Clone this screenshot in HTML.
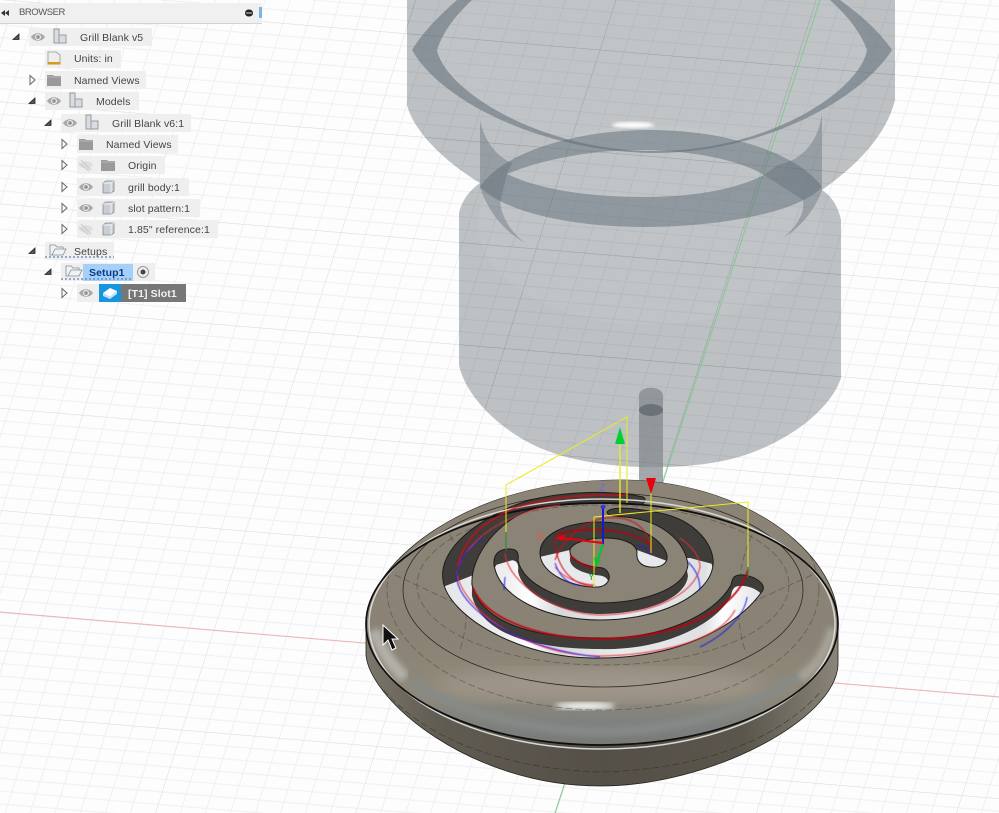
<!DOCTYPE html>
<html><head><meta charset="utf-8"><style>
html,body{margin:0;padding:0;background:#fdfdfd}
#p{position:relative;width:999px;height:813px;overflow:hidden;font-family:"Liberation Sans",sans-serif}
svg.s{position:absolute;left:0;top:0}
.r{position:absolute;height:18px;background:rgba(238,238,238,.94)}
.t{position:absolute;font-size:10.5px;line-height:14px;color:#444;white-space:nowrap;filter:blur(.25px);letter-spacing:.1px}
</style></head><body><div id="p">
<svg class="s" width="999" height="813" viewBox="0 0 999 813">
<defs>
<pattern id="g" width="195" height="99.5" patternUnits="userSpaceOnUse" patternTransform="matrix(1 .084 -.32 1 603.7 663)">
<path d="M24.4 0V99.500M48.8 0V99.500M73.100 0V99.500M97.500 0V99.500M121.900 0V99.500M146.300 0V99.500M170.600 0V99.500M0 12.440H195M0 24.880H195M0 37.310H195M0 49.750H195M0 62.190H195M0 74.630H195M0 87.060H195" stroke="#f0f0f2" stroke-width="1" fill="none"/>
<path d="M0 0V99.500M0 0H195" stroke="#dcdcdd" stroke-width="1.100" fill="none"/>
</pattern>
<pattern id="g2" width="195" height="99.5" patternUnits="userSpaceOnUse" patternTransform="matrix(1 .084 -.32 1 603.7 663)">
<path d="M24.4 0V99.500M48.8 0V99.500M73.100 0V99.500M97.500 0V99.500M121.900 0V99.500M146.300 0V99.500M170.600 0V99.500M0 12.440H195M0 24.880H195M0 37.310H195M0 49.750H195M0 62.190H195M0 74.630H195M0 87.060H195" stroke="#a3a9ad" stroke-width="1" fill="none" stroke-opacity=".35"/>
<path d="M0 0V99.500M0 0H195" stroke="#858b90" stroke-width="1.100" fill="none" stroke-opacity=".6"/>
</pattern>
<path id="hold" d="M407 0V105C415 135 450 165 480 183C470 190 462 200 459 213V365C465 395 500 432 545 450C600 472 695 472 745 455C790 440 830 410 841 378V220C838 205 830 195 822 190C850 170 885 140 895 100V0Z"/>
<clipPath id="ch"><use href="#hold"/></clipPath>
<linearGradient id="dome" x1="0" y1="480" x2="0" y2="745" gradientUnits="userSpaceOnUse">
<stop offset="0" stop-color="#8b8477"/><stop offset=".6" stop-color="#8a8375"/><stop offset=".8" stop-color="#8f897a"/><stop offset=".93" stop-color="#7d807e"/><stop offset="1" stop-color="#787a77"/>
</linearGradient>
<linearGradient id="wall" x1="366" y1="0" x2="838" y2="0" gradientUnits="userSpaceOnUse">
<stop offset="0" stop-color="#7b766a"/><stop offset=".15" stop-color="#615c52"/><stop offset=".5" stop-color="#544f47"/><stop offset=".8" stop-color="#5b564c"/><stop offset="1" stop-color="#8a8578"/>
</linearGradient>
<filter id="b3"><feGaussianBlur stdDeviation="3"/></filter>
<filter id="b1"><feGaussianBlur stdDeviation="1.500"/></filter>
<filter id="b8"><feGaussianBlur stdDeviation="9"/></filter>
<filter id="soft"><feGaussianBlur stdDeviation=".4"/></filter>
<path id="sa" d="M643 497C610 489 540 490 500 512C455 535 440 560 443 580C447 615 520 660 600 658C680 658 740 625 763 590C766 582 750 574 740 575C733 575 732 580 731 585C715 615 660 640 600 638C530 638 482 622 472 585C470 555 500 520 530 510C560 500 610 503 640 505C646 503 646 498 643 497Z"/>
<path id="sb" d="M607 512C612 505 640 509 660 513C695 520 715 545 713 565C710 595 660 620 600 620C550 620 500 600 494 565C493 553 500 549 510 549C517 549 519 553 518 560C522 585 565 603 600 603C640 603 685 590 688 565C685 540 660 520 625 517C615 516 607 516 607 512Z"/>
<path id="sc" d="M667 556C665 540 635 522 600 522C565 522 540 535 540 553C540 575 575 588 598 587C608 586 612 578 607 571C603 566 595 568 590 566C578 563 569 558 570 550C572 542 590 538 605 538C622 538 636 543 637 552C636 560 640 566 650 567C660 568 668 564 667 556Z"/>
<clipPath id="ca"><use href="#sa"/></clipPath>
<clipPath id="cb"><use href="#sb"/></clipPath>
<clipPath id="cc"><use href="#sc"/></clipPath>
<clipPath id="cd"><path d="M366 622C370 560 470 480 620 480C740 480 838 550 838 622V665C835 720 710 786 600 786C470 786 370 700 366 655Z"/></clipPath>
<linearGradient id="fl" x1="440" y1="0" x2="770" y2="0" gradientUnits="userSpaceOnUse">
<stop offset="0" stop-color="#e5e6ea"/><stop offset=".2" stop-color="#eeeef0"/><stop offset=".27" stop-color="#fff"/><stop offset=".36" stop-color="#d8d9dc"/><stop offset=".55" stop-color="#e9eaec"/><stop offset=".8" stop-color="#dfe0e3"/><stop offset=".86" stop-color="#fff"/><stop offset="1" stop-color="#dcdde2"/>
</linearGradient>
</defs>
<rect width="999" height="813" fill="#fdfdfd"/>
<rect width="999" height="813" fill="url(#g)"/>
<path d="M0 612L999 697" stroke="#eeb4b4" stroke-width="1"/>

<!-- translucent tool holder -->
<use href="#hold" fill="#b0b5b8" fill-opacity=".84"/>
<rect width="999" height="480" fill="url(#g2)" clip-path="url(#ch)"/>
<ellipse cx="652" cy="45" rx="215" ry="105" fill="#fff" fill-opacity=".06"/>
<ellipse cx="650" cy="225" rx="172" ry="100" fill="#fff" fill-opacity=".05"/>
<path d="M820 0L555 813" stroke="#7fcb8c" stroke-width="1"/>
<!-- top ring -->
<path fill="#5e6c77" fill-opacity=".55" d="M457 0Q425 28 412 50C440 100 540 152 655 153C765 152 860 100 892 50Q875 25 840 0H830Q858 25 867 50C860 90 770 151 655 151C540 151 445 90 437 50Q445 25 472 0Z"/>
<!-- neck walls -->
<path fill="#5e6c77" fill-opacity=".4" d="M480 120C485 145 500 158 512 163L507 174L500 203C503 220 512 233 525 243C505 232 488 212 480 187Z"/>
<path fill="#5e6c77" fill-opacity=".4" d="M822 113C818 145 800 160 778 165L764 175L803 200C805 215 795 228 783 238C800 228 815 210 822 190Z"/>
<!-- second ring -->
<path fill="#5e6c77" fill-opacity=".5" fill-rule="evenodd" d="M480 187C500 155 570 130 650 130C730 130 800 155 822 187C800 212 720 227 645 227C570 227 505 212 480 187ZM507 174C540 160 590 150 640 150C690 150 740 160 764 175C735 190 690 197 645 197C590 197 540 190 507 174Z"/>
<ellipse cx="633" cy="125" rx="21" ry="3" fill="#fff" filter="url(#b1)"/>
<!-- stem -->
<path d="M639 396C639 385 663 385 663 396V490H639Z" fill="#80868a" fill-opacity=".72"/>
<ellipse cx="651" cy="410" rx="12" ry="6" fill="#60676c" fill-opacity=".75"/>

<!-- disc -->
<path d="M366 622C370 560 470 480 620 480C740 480 838 550 838 622V665C835 720 710 786 600 786C470 786 370 700 366 655Z" fill="url(#wall)" stroke="#23221f" stroke-width=".8"/>
<path d="M366 624C370 560 470 480 620 480C740 480 838 550 838 624A236 121 0 0 1 366 624Z" fill="url(#dome)"/>
<g clip-path="url(#cd)">
<ellipse cx="600" cy="685" rx="165" ry="16" fill="#a0978a" filter="url(#b8)"/>
<ellipse cx="585" cy="706" rx="30" ry="3.500" fill="#fff" filter="url(#b3)"/>
<path d="M410 680C460 715 530 730 600 732C680 730 745 712 800 675" stroke="#868a88" stroke-width="8" fill="none" filter="url(#b3)"/>
<path d="M374 630C380 650 392 665 405 678" stroke="#b2b0a9" stroke-width="12" fill="none" filter="url(#b3)"/>
<path d="M833 628C825 655 815 668 800 678" stroke="#a7a398" stroke-width="10" fill="none" filter="url(#b3)"/>
<!-- lines on dome -->
<g fill="none" stroke="#2b2925" stroke-width=".8">
<ellipse cx="603" cy="590" rx="200" ry="97"/>
<g stroke-dasharray="7 3" stroke="#3c3a35" stroke-opacity=".5">
<ellipse cx="603" cy="590" rx="216" ry="120"/>
<ellipse cx="603" cy="585" rx="186" ry="80"/>
<path d="M395 575L470 610M812 575L735 610M450 535C470 570 470 620 460 650M752 535C735 570 735 620 745 650"/>
</g>
</g>
</g>
<!-- slots -->
<use href="#sa" fill="#3f3d39"/>
<g clip-path="url(#ca)"><use href="#sa" fill="url(#fl)" transform="translate(0 11)"/><path d="M430 592L476 574L745 574L770 592V480H430Z" fill="#3f3d39"/></g>
<use href="#sb" fill="#3f3d39"/>
<g clip-path="url(#cb)"><use href="#sb" fill="url(#fl)" transform="translate(0 11)"/><path d="M485 568L520 558L690 558L720 566V500H485Z" fill="#3f3d39"/></g>
<use href="#sc" fill="#3f3d39"/>
<g clip-path="url(#cc)"><use href="#sc" fill="#e8e9ec" transform="translate(0 8)"/><path d="M535 558L570 550L637 550L670 562V515H535Z" fill="#3f3d39"/></g>
<g fill="none" stroke="#1d1c1a" stroke-width="1"><use href="#sa"/><use href="#sb"/><use href="#sc"/></g>
<!-- rim lines -->
<ellipse cx="602" cy="624" rx="233" ry="125" fill="none" stroke="#d8d8d4" stroke-width="1.500"/>
<ellipse cx="602" cy="624" rx="236" ry="121" fill="none" stroke="#0f0f0f" stroke-width="1.700"/>
<path d="M384 690C430 745 520 770 600 772C690 770 775 745 822 690" fill="none" stroke="#2f2e2a" stroke-opacity=".7" stroke-width=".7" stroke-dasharray="7 3"/>

<!-- toolpaths -->
<g fill="none" filter="url(#soft)">
<path d="M457 566C468 530 490 520 517 507C560 495 590 495 627 495" stroke="#c5101a" stroke-width="1.500"/>
<path d="M473 588C485 618 535 638 600 639C670 638 735 615 748 570" stroke="#c00010" stroke-width="1.700"/>
<path d="M457 572C460 605 520 655 600 656C660 655 720 640 735 610" stroke="#e4303c" stroke-width="1"/>
<path d="M457 572C470 530 520 510 560 505" stroke="#e4303c" stroke-width=".9"/>
<path d="M505 553C508 585 560 615 600 615C650 615 695 595 700 567C700 555 690 545 680 538" stroke="#e4303c" stroke-width="1"/>
<path d="M555 560C560 545 580 522 605 518C635 515 650 530 651 552" stroke="#c5101a" stroke-width="1"/>
<path d="M555 567C565 580 585 585 595 585" stroke="#e4303c" stroke-width="1"/>
<path d="M555 538C555 565 570 585 593 586" stroke="#d00010" stroke-width="1"/>
<path d="M570 555C580 565 590 568 597 568" stroke="#b80010" stroke-width="1.500"/>
<path d="M555 535C575 528 625 525 651 545" stroke="#b80010" stroke-width="1.500"/>
<path d="M484 538C465 550 456 565 457 580C462 610 520 650 600 657" stroke="#2222dd" stroke-width="1"/>
<path d="M700 647C725 635 745 615 747 597" stroke="#2222dd" stroke-width="1"/>
<path d="M505 577L504 590M637 545C645 547 650 550 651 554M688 562C696 570 700 578 700 590" stroke="#2222dd" stroke-width="1"/>
<path d="M555 563C560 578 570 585 580 585" stroke="#2222dd" stroke-width="1"/>
</g>
<!-- yellow box -->
<g fill="none" stroke="#ecec20" stroke-width="1">
<path d="M506 532V485L627 417V503"/>
<path d="M594 587V517L687 508L748 502V567"/>
<path d="M651 490V553"/>
</g>
<path d="M620 445V513" stroke="#ecec20" stroke-width="1.400"/>
<path d="M506 532V551M748 567V577" stroke="#2a8a2a" stroke-width="1"/>
<!-- gizmo -->
<path d="M620 427L625 444H615Z" fill="#00d030"/>
<path d="M646 478H656L651 494Z" fill="#e8000a"/>
<path d="M603 545V507" stroke="#1818cc" stroke-width="2"/>
<ellipse cx="603" cy="507" rx="2.500" ry="2" fill="#3535dd"/>
<path d="M603 543L562 538" stroke="#e8000a" stroke-width="2"/>
<path d="M555 538L565 534L564 541Z" fill="#e8000a"/>
<path d="M603 544L597 562" stroke="#10c030" stroke-width="2.400"/>
<path d="M595 568L594 557L601 560Z" fill="#10c030"/>
<text x="599" y="491" font-family="'Liberation Sans',sans-serif" font-size="11" fill="#6a6ade">Z</text>
<text x="536" y="540" font-family="'Liberation Sans',sans-serif" font-size="11" fill="#e05858">X</text>
<text x="588" y="580" font-family="'Liberation Sans',sans-serif" font-size="10" fill="#2a9a3a">Y</text>
<!-- cursor -->
<path d="M383 625V645L388 640L392 650L396 648L392 639L398 639Z" fill="#111" stroke="#fff" stroke-width="1"/>
</svg>

<!-- browser header -->
<div style="position:absolute;left:0;top:3px;width:262px;height:20px;background:#f0f0f0;border-bottom:1px solid #d4d4d4"></div>
<div class="t" style="left:19px;top:6px;color:#555;font-size:9.500px;letter-spacing:-.45px">BROWSER</div>
<svg class="s" width="270" height="30">
<path d="M1 13L5 10V16ZM5 13L9 10V16Z" fill="#333"/>
<rect x="245" y="9.500" width="8" height="7" rx="3.500" fill="#222"/><rect x="246" y="12.500" width="6" height="1" fill="#ddd"/>
<rect x="259" y="7" width="3" height="11" fill="#7fb4e0"/>
</svg>

<!-- rows -->
<div class="r" style="left:29px;top:28px;width:123px"></div>
<div class="r" style="left:45px;top:50px;width:76px"></div>
<div class="r" style="left:45px;top:71px;width:101px"></div>
<div class="r" style="left:45px;top:92px;width:94px"></div>
<div class="r" style="left:61px;top:114px;width:130px"></div>
<div class="r" style="left:77px;top:135px;width:101px"></div>
<div class="r" style="left:77px;top:156px;width:88px"></div>
<div class="r" style="left:77px;top:178px;width:112px"></div>
<div class="r" style="left:77px;top:199px;width:123px"></div>
<div class="r" style="left:77px;top:220px;width:141px"></div>
<div class="r" style="left:45px;top:242px;width:69px"></div>
<div class="r" style="left:61px;top:263px;width:94px"></div>
<div class="r" style="left:77px;top:284px;width:22px"></div>
<div style="position:absolute;left:121px;top:284px;width:65px;height:18px;background:#777"></div>
<div style="position:absolute;left:83px;top:264px;width:50px;height:17px;background:#a5d0fa"></div>
<div style="position:absolute;left:99px;top:284px;width:22px;height:18px;background:#1696dc"></div>

<div class="t" style="left:80px;top:31px">Grill Blank v5</div>
<div class="t" style="left:74px;top:52px">Units: in</div>
<div class="t" style="left:74px;top:74px">Named Views</div>
<div class="t" style="left:96px;top:95px">Models</div>
<div class="t" style="left:112px;top:117px">Grill Blank v6:1</div>
<div class="t" style="left:106px;top:138px">Named Views</div>
<div class="t" style="left:128px;top:159px">Origin</div>
<div class="t" style="left:128px;top:181px">grill body:1</div>
<div class="t" style="left:128px;top:202px">slot pattern:1</div>
<div class="t" style="left:128px;top:223px">1.85" reference:1</div>
<div class="t" style="left:74px;top:245px">Setups</div>
<div class="t" style="left:89px;top:266px;color:#0b3a80;font-weight:bold">Setup1</div>
<div class="t" style="left:128px;top:287px;color:#f2f2f2;font-weight:bold">[T1] Slot1</div>

<svg class="s" width="270" height="310">
<defs>
<g id="eye"><path d="M-7 0C-4-5 4-5 7 0C4 5-4 5-7 0Z" fill="#a8a8a8"/><circle r="3" fill="#eee"/><circle r="1.900" fill="#959595"/></g>
<g id="eyeoff"><path d="M-7 0C-4-5 4-5 7 0C4 5-4 5-7 0Z" fill="#dedede"/><path d="M-5-5L5 5M-7-2L3 6" stroke="#d0d0d0" stroke-width="1.300"/></g>
<g id="comp"><path d="M-6-8H-1V-2H6V6H-6Z" fill="#d8dde3" stroke="#979a9e" stroke-width="1"/><path d="M-1-2V6" stroke="#979a9e"/></g>
<g id="folder"><path d="M-7-5H-1L0-4H7V6H-7Z" fill="#9a9a9a"/><path d="M-7-3H7" stroke="#b5b5b5"/></g>
<g id="body"><path d="M-5-4L-2-6H6V4L3 6H-5Z" fill="#c9ced5" stroke="#85898e" stroke-width=".8"/><path d="M-5-4H3V6M3-4L6-6" fill="none" stroke="#fff" stroke-width=".7"/></g>
<g id="down"><path d="M-3 2.500H3V-3Z" fill="#555" stroke="#222" stroke-width=".8"/></g>
<g id="right"><path d="M-2-4.500L3 0L-2 4.500Z" fill="#fafafa" stroke="#666" stroke-width="1"/></g>
<g id="setup"><path d="M-8 5V-5H-3L-1-3H5V-1H-3L-6 5ZM-6 5L-3-1H8L5 5Z" fill="#eef3f8" stroke="#8a8a8a" stroke-width=".8"/></g>
</defs>
<use href="#down" x="16" y="37"/><use href="#down" x="32" y="101"/><use href="#down" x="48" y="123"/><use href="#down" x="32" y="251"/><use href="#down" x="48" y="272"/>
<use href="#right" x="32" y="80"/><use href="#right" x="64" y="144"/><use href="#right" x="64" y="165"/><use href="#right" x="64" y="187"/><use href="#right" x="64" y="208"/><use href="#right" x="64" y="229"/><use href="#right" x="64" y="293"/>
<use href="#eye" x="38" y="37"/><use href="#eye" x="54" y="101"/><use href="#eye" x="70" y="123"/><use href="#eye" x="86" y="187"/><use href="#eye" x="86" y="208"/><use href="#eye" x="86" y="293"/>
<use href="#eyeoff" x="86" y="165"/><use href="#eyeoff" x="86" y="229"/>
<use href="#comp" x="60" y="37"/><use href="#comp" x="76" y="101"/><use href="#comp" x="92" y="123"/>
<use href="#folder" x="54" y="80"/><use href="#folder" x="86" y="144"/><use href="#folder" x="108" y="165"/>
<use href="#body" x="108" y="187"/><use href="#body" x="108" y="208"/><use href="#body" x="108" y="229"/>
<path d="M48 52H56L60 55V63H48Z" fill="#eee" stroke="#999" stroke-width=".8"/><rect x="47.500" y="62" width="13" height="2.500" fill="#d69a1e"/>
<use href="#setup" x="58" y="250"/><use href="#setup" x="74" y="271"/>
<path d="M45 257H114" stroke="#5b7fb5" stroke-width="1.200" stroke-dasharray="2 2"/>
<path d="M61 279H133" stroke="#5b7fb5" stroke-width="1.200" stroke-dasharray="2 2"/>
<circle cx="143" cy="272" r="5.500" fill="#eee" stroke="#999"/><circle cx="143" cy="272" r="2.500" fill="#444"/>
<path d="M103 293L110 288L117 291L110 297Z" fill="#fff"/><path d="M103 293V296L110 299L117 294V291L110 297Z" fill="#bfe0f5"/>
</svg>
</div></body></html>
